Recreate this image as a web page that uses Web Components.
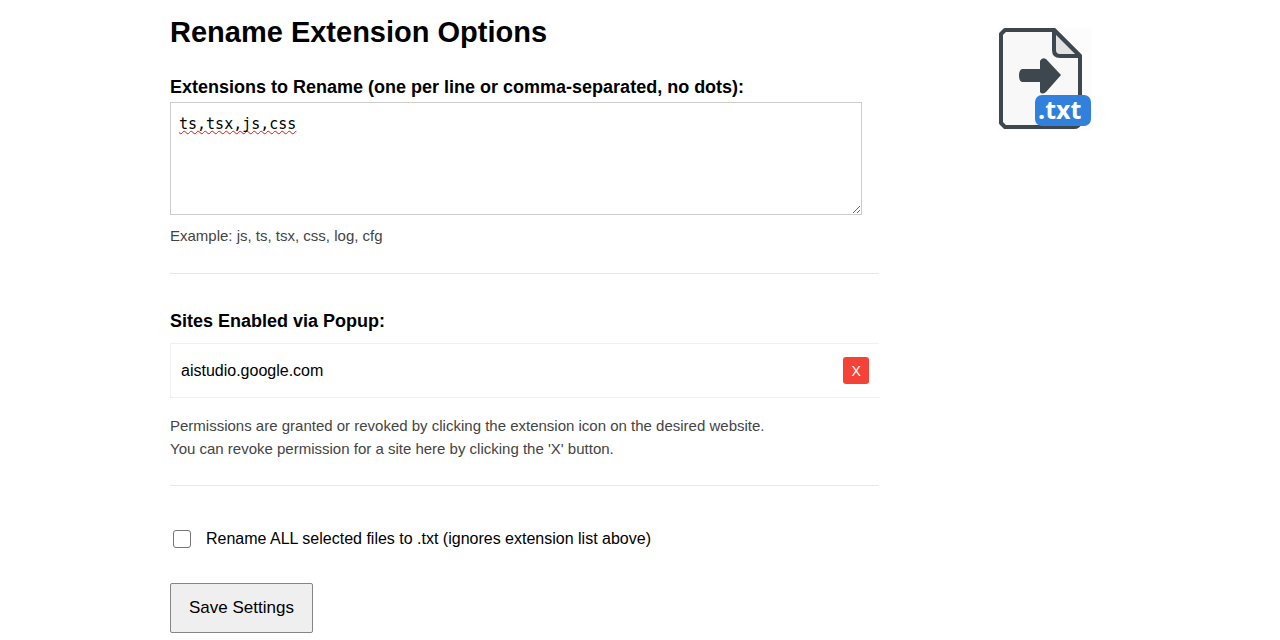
<!DOCTYPE html>
<html lang="en">
<head>
<meta charset="utf-8">
<title>Rename Extension Options</title>
<style>
body { margin: 0; background: #fff; color: #000; font-family: "Liberation Sans", Arial, sans-serif; font-size: 16px; line-height: 24px; }
</style>
</head>
<body>
<options-page>
  <extension-list value="ts,tsx,js,css">Extensions to Rename (one per line or comma-separated, no dots):<span slot="hint">Example: js, ts, tsx, css, log, cfg</span></extension-list>
  <site-list>
    Sites Enabled via Popup:
    <site-item slot="sites">aistudio.google.com</site-item>
    <span slot="hint">Permissions are granted or revoked by clicking the extension icon on the desired website.<br>You can revoke permission for a site here by clicking the 'X' button.</span>
  </site-list>
  <check-option>Rename ALL selected files to .txt (ignores extension list above)</check-option>
  <save-button>Save Settings</save-button>
  <extension-logo slot="logo"></extension-logo>
</options-page>
<script>
function define(name, html, setup) {
  const template = document.createElement('template');
  template.innerHTML = html;
  customElements.define(name, class extends HTMLElement {
    constructor() {
      super();
      this.attachShadow({ mode: 'open' }).append(template.content.cloneNode(true));
    }
    connectedCallback() { if (setup) setup(this, this.shadowRoot); }
  });
}

define('options-page', `
<style>
:host { display: block; }
main { display: grid; grid-template-columns: minmax(0, 15fr) minmax(0, 7fr); padding: 12px 70px 7px 170px; }
h1 { margin: 0 0 24px; font-size: 29px; line-height: 40px; }
aside { display: flex; justify-content: center; align-items: flex-start; padding-top: 16px; }
</style>
<main><div><h1>Rename Extension Options</h1><slot></slot></div><aside><slot name="logo"></slot></aside></main>`);

define('extension-list', `
<style>
:host { display: block; border-bottom: 1px solid #e8e8e8; padding-bottom: 26px; }
label { display: block; font-size: 18px; font-weight: bold; margin-bottom: 4px; line-height: 22px; }
textarea { display: block; box-sizing: border-box; width: calc(100% - 17px); height: 113px; margin: 0; padding: 9px 8px; border: 1px solid #ccc; background: #fff; color: #000; outline: 0; resize: vertical;
  font: 15px/24px "DejaVu Sans Mono", monospace; text-decoration: underline wavy #e11 1px; text-underline-offset: 1px; text-decoration-skip-ink: none; }
p { margin: 9px 0 0; color: #444; font-size: 15px; line-height: 23px; }
</style>
<label for="list"><slot></slot></label>
<textarea id="list" spellcheck="false"></textarea>
<p><slot name="hint"></slot></p>`, (host, root) => {
  root.querySelector('textarea').value = host.getAttribute('value') || '';
});

define('site-list', `
<style>
:host { display: block; border-bottom: 1px solid #e8e8e8; padding: 36px 0 25px; }
h2 { margin: 0 0 11px; font-size: 18px; line-height: 22px; }
ul { margin: 0; padding: 0; list-style: none; border: 1px solid #f0f0f0; border-right: 0; }
p { margin: 16px 0 0; color: #444; font-size: 15px; line-height: 23px; }
</style>
<h2><slot></slot></h2>
<ul><li><slot name="sites"></slot></li></ul>
<p><slot name="hint"></slot></p>`);

define('site-item', `
<style>
:host { display: flex; align-items: center; justify-content: space-between; padding: 13px 10px; }
button { width: 26px; height: 27px; padding: 0; border: 0; border-radius: 3px; background: #f44336; color: #fff; font: 14px/26px "Liberation Sans", Arial, sans-serif; }
</style>
<span><slot></slot></span><button type="button" aria-label="Revoke permission">X</button>`);

define('check-option', `
<style>
:host { display: flex; align-items: center; gap: 15px; padding: 41px 0 32px 3px; }
input { appearance: none; box-sizing: border-box; width: 18px; height: 18px; margin: 0; border: 1px solid #767676; border-radius: 3px; background: #fff; }
input:checked { background: #0075ff; }
</style>
<input type="checkbox" id="all"><label for="all"><slot></slot></label>`);

define('save-button', `
<style>
:host { display: block; }
button { padding: 12px 18px; border: 1px solid #858585; border-radius: 2px; background: #efefef; color: #000; font: 17px/24px "Liberation Sans", Arial, sans-serif; }
</style>
<button type="button"><slot></slot></button>`);

define('extension-logo', `
<style>
:host { display: block; }
svg { display: block; }
</style>
<svg width="94" height="102" viewBox="0 0 94 102" role="img" aria-label="Rename to .txt">
<path d="M0 0h94v102H0z" fill="#fcfcfc"/>
<path d="M7 2H56L82 28V94Q81 99 76 99H7L3 95V6Z" fill="#f8f8f8" stroke="#3e474d" stroke-width="4" stroke-linejoin="round"/>
<path d="M56 2V22Q56 28 62 28H82Z" fill="#e2e2e2" stroke="#3e474d" stroke-width="4" stroke-linejoin="round"/>
<path d="M24 41H42V33Q44 29 48 31L63 47L48 64Q44 67 42 64V54H24Q21 53 21 47.500Q21 42 24 41Z" fill="#3e474d"/>
<rect x="37" y="67" width="56" height="31" rx="7" fill="#3181dc"/>
<text x="40" y="91" fill="#fff" font-family="Open Sans, Noto Sans, sans-serif" font-size="25" font-weight="700">.txt</text>
</svg>`);
</script>
</body>
</html>
